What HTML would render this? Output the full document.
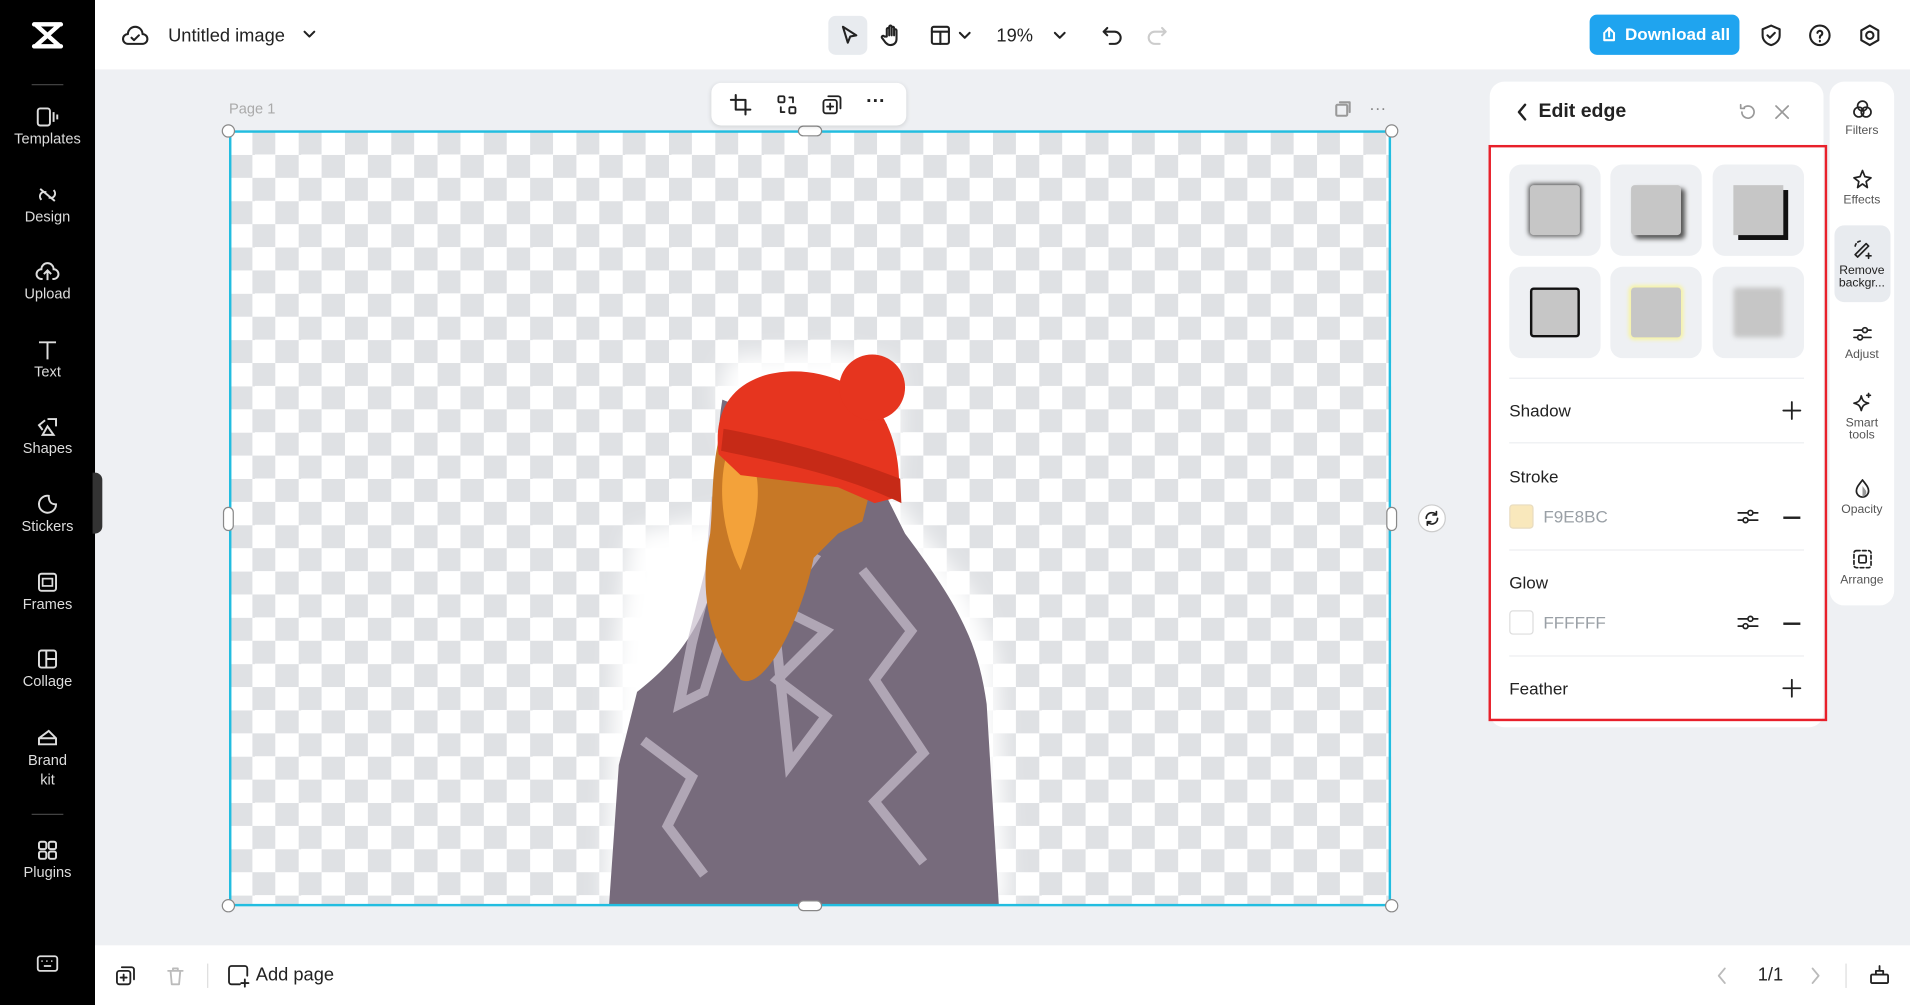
<!DOCTYPE html>
<html><head><meta charset="utf-8"><style>
*{box-sizing:border-box;margin:0;padding:0}
body{width:1910px;height:1005px;overflow:hidden;background:#eef0f3;font-family:"Liberation Sans",sans-serif}
#s{position:absolute;left:0;top:0;width:1568px;height:825px;transform:scale(1.21811,1.21818);transform-origin:0 0;background:#eef0f3}
.a{position:absolute}
.side{left:0;top:0;width:78px;height:825px;background:#000}
.si{position:absolute;left:0;width:78px;text-align:center;color:#ddd;font-size:12px}
.si svg{display:block;margin:0 auto 2px}
.top{left:78px;top:0;width:1490px;height:57px;background:#fff}
.bot{left:78px;top:776px;width:1490px;height:49px;background:#fff}
.ic{position:absolute;stroke:#222;fill:none;stroke-width:1.7;stroke-linecap:round;stroke-linejoin:round}
.panel{left:1223px;top:67px;width:274px;height:530px;background:#fff;border-radius:12px}
.tile{position:absolute;width:75px;height:75px;background:#eef0f3;border-radius:10px}
.sq{position:absolute;left:17px;top:17px;width:41px;height:41px;background:#c6c6c6;border-radius:3px}
.lbl{position:absolute;left:16px;font-size:14px;color:#222}
.hr{position:absolute;left:16px;width:242px;height:1px;background:#eceef1}
.strip{left:1502px;top:67px;width:53px;height:430px;background:#fff;border-radius:12px}
.ri{position:absolute;left:0;width:53px;text-align:center;font-size:10px;color:#555;line-height:10px}
.ri svg{display:block;margin:0 auto 4px}
.chk{left:188px;top:108px;width:954px;height:635px;background-color:#fff;background-image:conic-gradient(#dfe1e4 25%,#fff 0 50%,#dfe1e4 0 75%,#fff 0);background-size:38px 38px}
.h{position:absolute;width:11px;height:11px;border-radius:50%;background:#fff;border:1px solid #888}
.p{position:absolute;background:#fff;border:1px solid #888;border-radius:5px}
</style></head><body><div id="s">
<div class="a side">
 <svg class="a" style="left:24px;top:16px" width="30" height="26" viewBox="0 0 30 26"><path d="M4 4h22M4 22h22M5 4L25 22M25 4L5 22" stroke="#fff" stroke-width="3.6" fill="none" stroke-linecap="round"/></svg>
 <div class="a" style="left:26px;top:69px;width:26px;height:1px;background:#444"></div>
 <div class="si" style="top:87px"><svg width="20" height="18" viewBox="0 0 20 18"><rect x="2" y="2" width="10" height="14" rx="2" stroke="#ddd" stroke-width="1.6" fill="none"/><path d="M15 5v8M18 7v4" stroke="#ddd" stroke-width="1.6"/></svg>Templates</div>
 <div class="si" style="top:151px"><svg width="20" height="18" viewBox="0 0 20 18"><path d="M4 4l12 10M5 13c-3-3 0-8 4-6M15 5c3 3 0 8-4 6" stroke="#ddd" stroke-width="1.6" fill="none"/></svg>Design</div>
 <div class="si" style="top:214px"><svg width="20" height="18" viewBox="0 0 20 18"><path d="M6 15H5a4 4 0 0 1 0-8 5 5 0 0 1 10 0 4 4 0 0 1 0 8h-1M10 16V9M7 11l3-3 3 3" stroke="#ddd" stroke-width="1.6" fill="none"/></svg>Upload</div>
 <div class="si" style="top:278px"><svg width="20" height="18" viewBox="0 0 20 18"><path d="M3 3h14M10 3v14" stroke="#ddd" stroke-width="1.6"/></svg>Text</div>
 <div class="si" style="top:341px"><svg width="20" height="18" viewBox="0 0 20 18"><path d="M8 4l-5 4 3 4M10 3h7v6M10 9l-4 7h9z" stroke="#ddd" stroke-width="1.6" fill="none"/></svg>Shapes</div>
 <div class="si" style="top:405px"><svg width="20" height="18" viewBox="0 0 20 18"><path d="M17 9a7 7 0 1 1-6-7c0 5 2 7 6 7z" stroke="#ddd" stroke-width="1.6" fill="none"/></svg>Stickers</div>
 <div class="si" style="top:469px"><svg width="20" height="18" viewBox="0 0 20 18"><rect x="3" y="2" width="14" height="14" rx="2" stroke="#ddd" stroke-width="1.6" fill="none"/><rect x="6" y="6" width="8" height="6" stroke="#ddd" stroke-width="1.4" fill="none"/></svg>Frames</div>
 <div class="si" style="top:532px"><svg width="20" height="18" viewBox="0 0 20 18"><rect x="3" y="2" width="14" height="14" rx="2" stroke="#ddd" stroke-width="1.6" fill="none"/><path d="M9 2v14M9 9h8" stroke="#ddd" stroke-width="1.6"/></svg>Collage</div>
 <div class="si" style="top:596px;line-height:16px"><svg width="20" height="18" viewBox="0 0 20 18"><path d="M3 15V10l8-6 6 6v5zM3 10h14" stroke="#ddd" stroke-width="1.6" fill="none"/></svg>Brand<br>kit</div>
 <div class="a" style="left:26px;top:668px;width:26px;height:1px;background:#444"></div>
 <div class="si" style="top:689px"><svg width="20" height="18" viewBox="0 0 20 18"><rect x="3" y="2" width="6" height="6" rx="1.5" stroke="#ddd" stroke-width="1.6" fill="none"/><rect x="11" y="2" width="6" height="6" rx="1.5" stroke="#ddd" stroke-width="1.6" fill="none"/><rect x="3" y="10" width="6" height="6" rx="1.5" stroke="#ddd" stroke-width="1.6" fill="none"/><rect x="11" y="10" width="6" height="6" rx="1.5" stroke="#ddd" stroke-width="1.6" fill="none"/></svg>Plugins</div>
 <svg class="a" style="left:29px;top:783px" width="20" height="16" viewBox="0 0 20 16"><rect x="2" y="2" width="16" height="12" rx="2" stroke="#ddd" stroke-width="1.5" fill="none"/><path d="M5 6h1M9 6h1M13 6h1M7 10h6" stroke="#ddd" stroke-width="1.5"/></svg>
</div>
<div class="a" style="left:76px;top:388px;width:8px;height:50px;background:#333;border-radius:0 6px 6px 0"></div>
<div class="a top">
 <svg class="ic" style="left:22px;top:19px" width="22" height="20" viewBox="0 0 22 20"><path d="M6 17H5a4 4 0 0 1 0-8 6 6 0 0 1 12 0 4 4 0 0 1 0 8H6zM8 12l2 2 4-4"/></svg>
 <div class="a" style="left:60px;top:21px;font-size:15px;color:#222">Untitled image</div>
 <svg class="ic" style="left:170px;top:23px" width="12" height="10" viewBox="0 0 12 10"><path d="M2 3l4 4 4-4"/></svg>
 <div class="a" style="left:602px;top:13px;width:32px;height:32px;background:#e8ebef;border-radius:6px"></div>
 <svg class="ic" style="left:609px;top:19px" width="20" height="20" viewBox="0 0 20 20"><path d="M5 3l11 7-5 1-2 5z"/></svg>
 <svg class="ic" style="left:644px;top:19px" width="20" height="20" viewBox="0 0 20 20"><path d="M6 11V5a1 1 0 0 1 2 0v5V3a1 1 0 0 1 2 0v7V4a1 1 0 0 1 2 0v6V6a1 1 0 0 1 2 0v7c0 3-2 5-5 5-2 0-3-1-4-2l-3-4a1 1 0 0 1 2-1z"/></svg>
 <svg class="ic" style="left:684px;top:19px" width="20" height="20" viewBox="0 0 20 20"><rect x="3" y="3" width="14" height="14" rx="1.5"/><path d="M3 7h14M10 7v10"/></svg>
 <svg class="ic" style="left:708px;top:24px" width="12" height="10" viewBox="0 0 12 10"><path d="M2 3l4 4 4-4"/></svg>
 <div class="a" style="left:740px;top:21px;font-size:15px;color:#222">19%</div>
 <svg class="ic" style="left:786px;top:24px" width="12" height="10" viewBox="0 0 12 10"><path d="M2 3l4 4 4-4"/></svg>
 <svg class="ic" style="left:825px;top:19px" width="20" height="20" viewBox="0 0 20 20"><path d="M6 4L3 7l3 3M3 7h9a5 5 0 0 1 0 10H8"/></svg>
 <svg class="ic" style="left:862px;top:19px;stroke:#ccc" width="20" height="20" viewBox="0 0 20 20"><path d="M14 4l3 3-3 3M17 7H8a5 5 0 0 0 0 10h4"/></svg>
 <div class="a" style="left:1227px;top:12px;width:123px;height:33px;background:#1fa4ef;border-radius:6px;color:#fff;font-size:14px;font-weight:bold;line-height:33px;padding-left:29px">Download all</div>
 <svg class="ic" style="left:1236px;top:21px;stroke:#fff" width="14" height="14" viewBox="0 0 14 14"><path d="M3 6v6h8V6M7 9V2M4 5l3-3 3 3"/></svg>
 <svg class="ic" style="left:1366px;top:19px" width="20" height="20" viewBox="0 0 20 20"><path d="M10 2l7 3v5c0 4-3 7-7 8-4-1-7-4-7-8V5zM7 10l2 2 4-4"/></svg>
 <svg class="ic" style="left:1406px;top:19px" width="20" height="20" viewBox="0 0 20 20"><circle cx="10" cy="10" r="8"/><path d="M8 8a2 2 0 1 1 3 2c-1 .5-1 1-1 2M10 14.5v.5"/></svg>
 <svg class="ic" style="left:1447px;top:19px" width="20" height="20" viewBox="0 0 20 20"><path d="M10 2l7 4v8l-7 4-7-4V6z"/><circle cx="10" cy="10" r="3"/></svg>
</div>
<div class="a" style="left:188px;top:82px;font-size:12px;color:#aaa">Page 1</div>
<svg class="ic" style="left:1095px;top:82px;stroke:#999" width="16" height="16" viewBox="0 0 16 16"><rect x="2" y="4" width="9" height="9" rx="1"/><path d="M5 2h8v8"/></svg>
<div class="a" style="left:1124px;top:80px;font-size:14px;color:#888">···</div>
<div class="a chk"></div>
<svg class="a" style="left:188px;top:108px" width="954" height="635" viewBox="0 0 954 635">
 <defs><filter id="g"><feGaussianBlur stdDeviation="9"/></filter></defs>
 <path d="M400 250 L402 190 L420 310 L330 330 L318 420 L308 635 L640 635 L630 430 L610 380 L560 320 L545 300 L550 240 L548 190 L520 185 L500 180 L410 185z" fill="#fff" filter="url(#g)"/>
 <path d="M405 220 C395 280 410 330 395 380 C380 420 360 440 335 460 L320 520 L312 635 L632 635 L622 470 C615 420 600 390 555 330 L540 300 L540 240 L500 240 L430 230z" fill="#776b7c"/>
 <path d="M400 300 L415 380 L390 460 L370 470 L380 420 L395 360z M440 330 l40 20 -30 40 40 20 -40 40 40 30 -30 40z M520 360 l40 50 -30 40 40 60 -40 40 40 50 M340 500 l40 30 -20 40 30 40" stroke="#c9bfcd" stroke-width="8" fill="none" opacity=".7"/>
 <path d="M410 230 C395 260 398 300 395 330 C385 380 395 420 420 450 C440 460 470 400 480 350 L500 330 L520 320 L530 280 L500 240z" fill="#c77826"/>
 <path d="M410 260 C400 290 405 330 420 360 C430 330 440 300 430 270z" fill="#f3a23a"/>
 <path d="M402 265 C398 235 408 210 440 200 C470 192 500 200 520 215 C540 230 552 260 550 300 L530 305 L500 292 L420 282z" fill="#e6351f"/>
 <path d="M404 262 C450 272 500 280 552 305 L551 285 C500 265 450 252 406 244z" fill="#c62a17"/>
 <circle cx="528" cy="210" r="27" fill="#e6351f"/>
</svg>
<div class="a" style="left:188px;top:107px;width:954px;height:637px;border:2px solid #22bde0"></div>
<div class="h" style="left:182px;top:102px"></div><div class="h" style="left:1137px;top:102px"></div>
<div class="h" style="left:182px;top:738px"></div><div class="h" style="left:1137px;top:738px"></div>
<div class="p" style="left:655px;top:103px;width:20px;height:9px"></div><div class="p" style="left:655px;top:739px;width:20px;height:9px"></div>
<div class="p" style="left:183px;top:416px;width:9px;height:20px"></div><div class="p" style="left:1138px;top:416px;width:9px;height:20px"></div>
<div class="a" style="left:1164px;top:414px;width:23px;height:23px;border-radius:50%;background:#fff;border:1px solid #ccc"></div>
<svg class="ic" style="left:1169px;top:419px;stroke-width:1.5" width="13" height="13" viewBox="0 0 14 14"><path d="M2 7a5 5 0 0 1 9-3M12 7a5 5 0 0 1-9 3M11 1v3H8M3 13v-3h3"/></svg>
<div class="a" style="left:584px;top:68px;width:160px;height:35px;background:#fff;border-radius:8px;box-shadow:0 1px 4px rgba(0,0,0,.12)"></div>
<svg class="ic" style="left:599px;top:77px" width="18" height="18" viewBox="0 0 18 18"><path d="M5 1v12h12M1 5h12v12"/></svg>
<svg class="ic" style="left:637px;top:77px;stroke-width:1.5" width="18" height="18" viewBox="0 0 18 18"><rect x="2" y="2" width="5" height="5" rx="1"/><rect x="11" y="11" width="5" height="5" rx="1"/><path d="M11 3h3v4M7 15H4v-4"/></svg>
<svg class="ic" style="left:674px;top:77px;stroke-width:1.5" width="18" height="18" viewBox="0 0 18 18"><rect x="2" y="5" width="11" height="11" rx="2"/><path d="M6 2h8a2 2 0 0 1 2 2v8M7.5 8v5M5 10.5h5"/></svg>
<div class="a" style="left:711px;top:75px;font-size:16px;font-weight:bold;color:#222">···</div>
<div class="a panel">
 <svg class="ic" style="left:21px;top:17px;stroke-width:2" width="12" height="16" viewBox="0 0 12 16"><path d="M8 2L3 8l5 6"/></svg>
 <div class="a" style="left:40px;top:16px;font-size:16px;font-weight:bold;color:#222">Edit edge</div>
 <svg class="ic" style="left:204px;top:17px;stroke:#999;stroke-width:1.4" width="16" height="16" viewBox="0 0 16 16"><path d="M3 8a5 5 0 1 0 2-4M2 2v3h3"/></svg>
 <svg class="ic" style="left:232px;top:17px;stroke:#999;stroke-width:1.4" width="16" height="16" viewBox="0 0 16 16"><path d="M3 3l10 10M13 3L3 13"/></svg>
 <div class="tile" style="left:16px;top:68px"><div class="sq" style="box-shadow:0 0 4px 1px #555"></div></div>
 <div class="tile" style="left:99px;top:68px"><div class="sq" style="box-shadow:3px 3px 4px #555"></div></div>
 <div class="tile" style="left:183px;top:68px"><div class="sq" style="box-shadow:4px 4px 0 #111;border-radius:0"></div></div>
 <div class="tile" style="left:16px;top:152px"><div class="sq" style="border:2px solid #111"></div></div>
 <div class="tile" style="left:99px;top:152px"><div class="sq" style="box-shadow:0 0 3px 2px #f6f3a8"></div></div>
 <div class="tile" style="left:183px;top:152px"><div class="sq" style="filter:blur(2px)"></div></div>
 <div class="hr" style="top:243px"></div>
 <div class="lbl" style="top:262px">Shadow</div>
 <svg class="ic" style="left:240px;top:262px;stroke-width:1.5" width="16" height="16" viewBox="0 0 16 16"><path d="M8 1v14M1 8h14"/></svg>
 <div class="hr" style="top:296px"></div>
 <div class="lbl" style="top:316px">Stroke</div>
 <div class="a" style="left:16px;top:347px;width:20px;height:20px;background:#f9e8bc;border:1px solid #e8dcc0;border-radius:3px"></div>
 <div class="a" style="left:44px;top:349px;font-size:14px;color:#9aa0a6">F9E8BC</div>
 <svg class="ic" style="left:203px;top:350px;stroke-width:1.4" width="18" height="14" viewBox="0 0 18 14"><path d="M1 4h16M1 10h16"/><circle cx="11" cy="4" r="2" fill="#fff"/><circle cx="7" cy="10" r="2" fill="#fff"/></svg>
 <div class="a" style="left:241px;top:357px;width:14px;height:1.5px;background:#222"></div>
 <div class="hr" style="top:384px"></div>
 <div class="lbl" style="top:403px">Glow</div>
 <div class="a" style="left:16px;top:434px;width:20px;height:20px;background:#fff;border:1px solid #ddd;border-radius:3px"></div>
 <div class="a" style="left:44px;top:436px;font-size:14px;color:#9aa0a6">FFFFFF</div>
 <svg class="ic" style="left:203px;top:437px;stroke-width:1.4" width="18" height="14" viewBox="0 0 18 14"><path d="M1 4h16M1 10h16"/><circle cx="11" cy="4" r="2" fill="#fff"/><circle cx="7" cy="10" r="2" fill="#fff"/></svg>
 <div class="a" style="left:241px;top:444px;width:14px;height:1.5px;background:#222"></div>
 <div class="hr" style="top:471px"></div>
 <div class="lbl" style="top:490px">Feather</div>
 <svg class="ic" style="left:240px;top:490px;stroke-width:1.5" width="16" height="16" viewBox="0 0 16 16"><path d="M8 1v14M1 8h14"/></svg>
</div>
<div class="a" style="left:1222px;top:119px;width:278px;height:473px;border:2px solid #e8202a"></div>
<div class="a strip">
 <div class="ri" style="top:14px"><svg class="ic" style="position:static;stroke-width:1.4" width="18" height="18" viewBox="0 0 18 18"><circle cx="9" cy="6" r="4"/><circle cx="6" cy="11" r="4"/><circle cx="12" cy="11" r="4"/></svg>Filters</div>
 <div class="ri" style="top:71px"><svg class="ic" style="position:static;stroke-width:1.4" width="18" height="18" viewBox="0 0 18 18"><path d="M9 2l2 5 5 1-4 3 1 5-4-3-4 3 1-5-4-3 5-1z"/></svg>Effects</div>
 <div class="a" style="left:4px;top:118px;width:46px;height:63px;background:#e8ebef;border-radius:8px"></div>
 <div class="ri" style="top:129px;color:#222"><svg class="ic" style="position:static;stroke-width:1.4" width="18" height="18" viewBox="0 0 18 18"><path d="M5 15l9-9-2-2-9 9zM14 12v4M12 14h4" /><path d="M3 6a5 5 0 0 1 6-4" stroke-dasharray="2 2"/></svg>Remove<br>backgr...</div>
 <div class="ri" style="top:198px"><svg class="ic" style="position:static;stroke-width:1.4" width="18" height="18" viewBox="0 0 18 18"><path d="M2 6h14M2 12h14"/><circle cx="11" cy="6" r="2" fill="#fff"/><circle cx="7" cy="12" r="2" fill="#fff"/></svg>Adjust</div>
 <div class="ri" style="top:254px"><svg class="ic" style="position:static;stroke-width:1.4" width="18" height="18" viewBox="0 0 18 18"><path d="M8 4c1 4 2 5 6 6-4 1-5 2-6 6-1-4-2-5-6-6 4-1 5-2 6-6zM14 2v3M12.5 3.5h3"/></svg>Smart<br>tools</div>
 <div class="ri" style="top:325px"><svg class="ic" style="position:static;stroke-width:1.4" width="18" height="18" viewBox="0 0 18 18"><path d="M9 2c3 4 5 6 5 9a5 5 0 0 1-10 0c0-3 2-5 5-9z"/><path d="M9 7v9a4 4 0 0 0 3-5z" fill="#999" stroke="none"/></svg>Opacity</div>
 <div class="ri" style="top:383px"><svg class="ic" style="position:static;stroke-width:1.4" width="18" height="18" viewBox="0 0 18 18"><rect x="2" y="2" width="14" height="14" rx="2" stroke-dasharray="3 2"/><rect x="6" y="6" width="6" height="6" rx="1"/></svg>Arrange</div>
</div>
<div class="a bot">
 <svg class="ic" style="left:16px;top:16px;stroke-width:1.5" width="18" height="18" viewBox="0 0 18 18"><rect x="2" y="5" width="11" height="11" rx="2"/><path d="M6 2h8a2 2 0 0 1 2 2v8M7.5 8v5M5 10.5h5"/></svg>
 <svg class="ic" style="left:57px;top:16px;stroke:#bbb;stroke-width:1.5" width="18" height="18" viewBox="0 0 18 18"><path d="M3 5h12M7 5V3h4v2M5 5l1 11h6l1-11"/></svg>
 <div class="a" style="left:92px;top:15px;width:1px;height:20px;background:#ddd"></div>
 <svg class="ic" style="left:108px;top:15px;stroke-width:1.5" width="20" height="20" viewBox="0 0 20 20"><path d="M11 17H4a2 2 0 0 1-2-2V4a2 2 0 0 1 2-2h11a2 2 0 0 1 2 2v6M15 13v6M12 16h6"/></svg>
 <div class="a" style="left:132px;top:16px;font-size:15px;color:#222">Add page</div>
 <svg class="ic" style="left:1330px;top:17px;stroke:#bbb;stroke-width:1.5" width="12" height="16" viewBox="0 0 12 16"><path d="M8 2L3 8l5 6"/></svg>
 <div class="a" style="left:1365px;top:16px;font-size:15px;color:#222">1/1</div>
 <svg class="ic" style="left:1406px;top:17px;stroke:#bbb;stroke-width:1.5" width="12" height="16" viewBox="0 0 12 16"><path d="M4 2l5 6-5 6"/></svg>
 <div class="a" style="left:1437px;top:15px;width:1px;height:20px;background:#ddd"></div>
 <svg class="ic" style="left:1456px;top:15px;stroke-width:1.5" width="18" height="18" viewBox="0 0 18 18"><rect x="2" y="9" width="14" height="7" rx="1"/><path d="M6 9V6h6v3M9 2v4"/></svg>
</div>
</div></body></html>
